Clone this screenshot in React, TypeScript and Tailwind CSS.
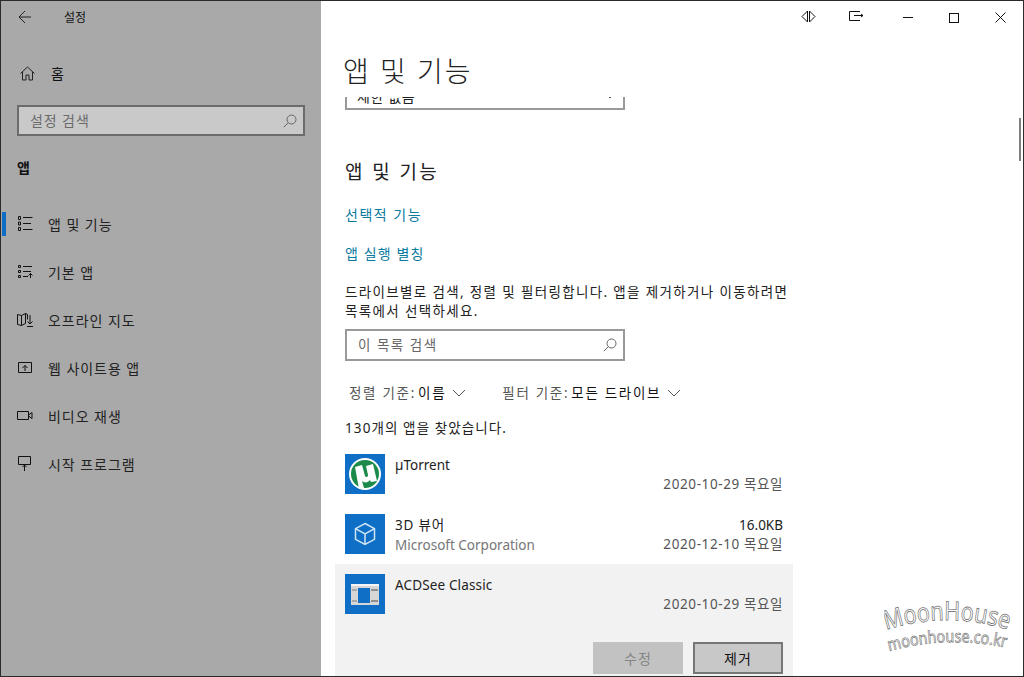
import React from 'react';

const font = "font-['Noto_Sans','Noto_Sans_CJK_KR',sans-serif]";

const Ico: React.FC<{ children: React.ReactNode }> = ({ children }) => (
  <svg width="16" height="16" viewBox="0 0 16 16" fill="none" stroke="#111" strokeWidth="1" className="shrink-0">
    {children}
  </svg>
);

const SearchIcon = () => (
  <svg width="14" height="14" viewBox="0 0 14 14" fill="none" stroke="#666" strokeWidth="1">
    <circle cx="8.5" cy="5.5" r="4.5" />
    <path d="M5.2 8.8 L0.8 13.2" />
  </svg>
);

const Chevron = () => (
  <svg width="14" height="8" viewBox="0 0 14 8" fill="none" stroke="#555" strokeWidth="1">
    <path d="M1 1 L7 7 L13 1" />
  </svg>
);

const navItems: { label: string; active?: boolean; icon: React.ReactNode }[] = [
  {
    label: '앱 및 기능',
    active: true,
    icon: (
      <Ico>
        <path d="M1.5.5h2v3h-2zM1.5 6h2v3h-2zM1.5 11.500h2v3h-2zM6 1.500h9.500M6 7.500h8M6 13.500h9.500" />
      </Ico>
    ),
  },
  {
    label: '기본 앱',
    icon: (
      <Ico>
        <path d="M1.5 1.5h2v2h-2zM1.5 6.5h2v2h-2zM1.5 11.5h2v2h-2zM6 2.5h9M6 7.5h8M6 12.5h5M13.5 14V9.500M11.5 11.500l2-2 2 2" />
      </Ico>
    ),
  },
  {
    label: '오프라인 지도',
    icon: (
      <Ico>
        <path d="M.5 2.5l4 1 4-2v10l-4 2-4-1zM4.5 3.5v10M8.5 1.5l2 1v5M13 3v9M10.500 9.500l2.500 2.500 2.500-2.500M10 14.500h6" />
      </Ico>
    ),
  },
  {
    label: '웹 사이트용 앱',
    icon: (
      <Ico>
        <path d="M1.5 2.5h13v10h-13zM8 11V5.5M5.5 8L8 5.5 10.500 8" />
      </Ico>
    ),
  },
  {
    label: '비디오 재생',
    icon: (
      <Ico>
        <path d="M.5 3.500h11v8h-11zM11.500 7l3.500-2.500v6L11.500 8" />
      </Ico>
    ),
  },
  {
    label: '시작 프로그램',
    icon: (
      <Ico>
        <path d="M1.500 .5h12v8h-12zM7.500 15V9M5.500 11l2-2 2 2" />
      </Ico>
    ),
  },
];

const Sidebar = () => (
  <aside className="w-[320px] shrink-0 bg-[#a9a9a9] flex flex-col text-[#111]">
    <div className="h-[32px] flex items-center pl-[17px]">
      <svg width="14" height="14" viewBox="0 0 14 14" fill="none" stroke="#222" strokeWidth="1">
        <path d="M13 7H1M7 1L1 7l6 6" />
      </svg>
      <span className="ml-[32px] mt-[1px] text-[12px]">설정</span>
    </div>
    <div className="mt-[30px] flex items-center pl-[19px] h-[20px]">
      <svg width="15" height="15" viewBox="0 0 15 15" fill="none" stroke="#222" strokeWidth="1">
        <path d="M.5 7.500L7.500 1l7 6.500M2.500 6v8h3.500V9h3v5h3.500V6" />
      </svg>
      <span className="ml-[16px] text-[14px] tracking-[1px]">홈</span>
    </div>
    <div className="ml-[16px] w-[288px] mt-[22px] h-[31px] border-2 border-[#6b6b6b] bg-[#c9c9c9] flex items-center justify-between pl-[11px] pr-[6px]">
      <span className="text-[14px] text-[#6a6a6a] tracking-[0.9px]">설정 검색</span>
      <SearchIcon />
    </div>
    <div className="mt-[22px] ml-[16px] text-[14px] font-bold leading-[20px]">앱</div>
    <nav className="mt-[22px] flex flex-col">
      {navItems.map((item) => (
        <div key={item.label} className="relative h-[48px] flex items-center pl-[16px]">
          {item.active && <span className="absolute left-[1px] top-[12px] h-[24px] w-[4px] bg-[#0f6cc4]" />}
          {item.icon}
          <span className="ml-[15px] text-[14px] tracking-[0.95px] text-[#222]">{item.label}</span>
        </div>
      ))}
    </nav>
  </aside>
);

const AppRow: React.FC<{
  name: React.ReactNode;
  date: string;
  size?: string;
  publisher?: string;
  icon: React.ReactNode;
}> = ({ name, date, size, publisher, icon }) => (
  <div className="flex h-[60px] pt-[10px] pl-[10px] pr-[10px]">
    <div className="w-[40px] h-[40px] bg-[#0f6fc6] flex items-center justify-center shrink-0">{icon}</div>
    <div className="ml-[10px] flex-1 text-[13.5px] leading-[20px] pt-[1px]">
      <div className="flex justify-between text-[#222]">
        <span>{name}</span>
        {size && <span>{size}</span>}
      </div>
      <div className="flex justify-between text-[#767676] -mt-[1px]">
        <span className="mt-[1px]">{publisher}</span>
        <span className="text-[#555] tracking-[0.6px]">{date}</span>
      </div>
    </div>
  </div>
);

const Main = () => (
  <main className="flex-1 bg-white relative flex flex-col overflow-hidden text-[#111]">
    <div className="h-[32px] flex justify-end items-center shrink-0 pt-[1px]">
      <div className="flex items-center gap-[33px] mr-[39px] -mt-[3px]">
        <svg width="15" height="13" viewBox="0 0 15 13" fill="none" stroke="#111" strokeWidth="1">
          <path d="M6.500 1v11L1 6.500zM8.500 1v11L14 6.500z" />
        </svg>
        <svg width="15" height="10" viewBox="0 0 15 10" fill="none" stroke="#111" strokeWidth="1">
          <path d="M11 .5H.5v9H11M5 4.500h9M12 3l2 1.500L12 6" />
        </svg>
      </div>
      <div className="flex items-center gap-[36px] mr-[17px]">
        <span className="w-[10px] h-[1px] bg-[#111]" />
        <span className="w-[10px] h-[10px] border border-[#111]" />
        <svg width="11" height="11" viewBox="0 0 11 11" stroke="#111" strokeWidth="1">
          <path d="M.5.5l10 10M10.500.5l-10 10" />
        </svg>
      </div>
    </div>
    <h1 className="ml-[22px] mt-[18px] text-[28px] leading-[40px] font-light tracking-[2px] shrink-0 h-[46px] text-[#222]">앱 및 기능</h1>

    <div className="flex-1 overflow-hidden pl-[24px] w-[472px]">
      <div className="w-[280px] h-[13px] border-2 border-t-0 border-[#999] flex items-start justify-between pl-[10px] pr-[6px] overflow-hidden">
        <span className="text-[14px] leading-[20px] -mt-[10px] text-[#222] tracking-[0.6px]">제한 없음</span>
        <span className="-mt-[6px]"><Chevron /></span>
      </div>
      <h2 className="mt-[47px] text-[19px] leading-[30px] tracking-[2.4px] text-[#222]">앱 및 기능</h2>
      <a className="block mt-[18px] text-[14px] leading-[20px] tracking-[1.5px] text-[#0a7a9e]">선택적 기능</a>
      <a className="block mt-[19px] text-[14px] leading-[20px] tracking-[1.1px] text-[#0a7a9e]">앱 실행 별칭</a>
      <p className="mt-[19px] text-[13.5px] leading-[19px] tracking-[1.35px] text-[#222] w-[456px]">
        드라이브별로 검색, 정렬 및 필터링합니다. 앱을 제거하거나 이동하려면
        <br />
        목록에서 선택하세요.
      </p>
      <div className="mt-[8px] w-[280px] h-[32px] border-2 border-[#999] flex items-center justify-between pl-[11px] pr-[6px]">
        <span className="text-[13.5px] text-[#666] tracking-[1.5px]">이 목록 검색</span>
        <SearchIcon />
      </div>
      <div className="mt-[17px] h-[30px] flex items-center text-[13.5px] pl-[4px] tracking-[1.7px]">
        <span className="text-[#555]">정렬 기준:</span>
        <span className="ml-[2px] text-[#111]">이름</span>
        <span className="ml-[6px]"><Chevron /></span>
        <span className="ml-[36px] text-[#555]">필터 기준:</span>
        <span className="ml-[2px] text-[#111]">모든 드라이브</span>
        <span className="ml-[6px]"><Chevron /></span>
      </div>
      <p className="mt-[10px] text-[13.5px] leading-[20px] tracking-[1.1px] text-[#222]">130개의 앱을 찾았습니다.</p>
      <div className="-ml-[10px] w-[458px] mt-[6px]">
        <AppRow
          name="µTorrent"
          date="2020-10-29 목요일"
          icon={
            <svg width="40" height="40" viewBox="0 0 40 40">
              <circle cx="20" cy="20" r="16" fill="#fff" />
              <circle cx="20" cy="20" r="14" fill="#1b8a4a" />
              <path d="M10 13l7-2 3 11c1 2 3 1 3-1l-2-9 7-2 4 17-6 1-1-2c-2 3-6 3-8 1l2 7-5 1z" fill="#fff" />
            </svg>
          }
        />
        <AppRow
          name={<span className="tracking-[0.8px]">3D 뷰어</span>}
          size="16.0KB"
          publisher="Microsoft Corporation"
          date="2020-12-10 목요일"
          icon={
            <svg width="40" height="40" viewBox="0 0 40 40" fill="none" stroke="#cfe6f7" strokeWidth="1.500">
              <path d="M20 9.500l9.500 5.200v10.600L20 30.500l-9.500-5.200V14.700zM10.500 14.700L20 20l9.500-5.300M20 20v10.500" />
            </svg>
          }
        />
        <div className="bg-[#f2f2f2] h-[113px]">
          <AppRow
            name={<span className="tracking-[0.15px]">ACDSee Classic</span>}
            date="2020-10-29 목요일"
            icon={
              <div className="w-[28px] h-[21px] bg-[#d6d6d6] flex flex-col">
                <div className="h-[2px] bg-[#f4f4f4]" />
                <div className="flex-1 flex items-center justify-between px-[1px]">
                  <div className="w-[5px] h-[13px] border-y-2 border-[#a9a9a9]" />
                  <div className="w-[12px] h-[15px] bg-[#0f6fc6]" />
                  <div className="w-[7px] h-[13px] border-y-2 border-[#8f8f8f]" />
                </div>
              </div>
            }
          />
          <div className="flex justify-end gap-[10px] pr-[10px] mt-[18px]">
            <button className="w-[90px] h-[32px] bg-[#c2c2c2] text-[14px] tracking-[1px] text-[#858585]">수정</button>
            <button className="w-[90px] h-[32px] bg-[#c8c8c8] border-2 border-[#767676] text-[14px] tracking-[1px] text-[#111]">제거</button>
          </div>
        </div>
      </div>
    </div>

    <div className="absolute right-[2px] top-[117px] w-[2px] h-[43px] bg-[#7f7f7f]" />

    <svg width="136" height="56" viewBox="0 0 136 56" className="absolute left-[563px] top-[599px]">
      <path id="mh1" d="M2 30 Q65 10 128 31" fill="none" />
      <path id="mh2" d="M5 51 Q65 35 124 48" fill="none" />
      <text fontFamily="Noto Sans" fontSize="26" fill="#fff" stroke="#777" strokeWidth="0.800">
        <textPath href="#mh1" textLength="124" lengthAdjust="spacingAndGlyphs">MoonHouse</textPath>
      </text>
      <text fontFamily="Noto Sans" fontSize="17" fill="#fff" stroke="#777" strokeWidth="0.700">
        <textPath href="#mh2" textLength="118" lengthAdjust="spacingAndGlyphs">moonhouse.co.kr</textPath>
      </text>
    </svg>
  </main>
);

export default function App() {
  return (
    <div className={`${font} w-[1024px] h-[677px] overflow-hidden flex border border-[#2b2b2b]`}>
      <Sidebar />
      <Main />
    </div>
  );
}
